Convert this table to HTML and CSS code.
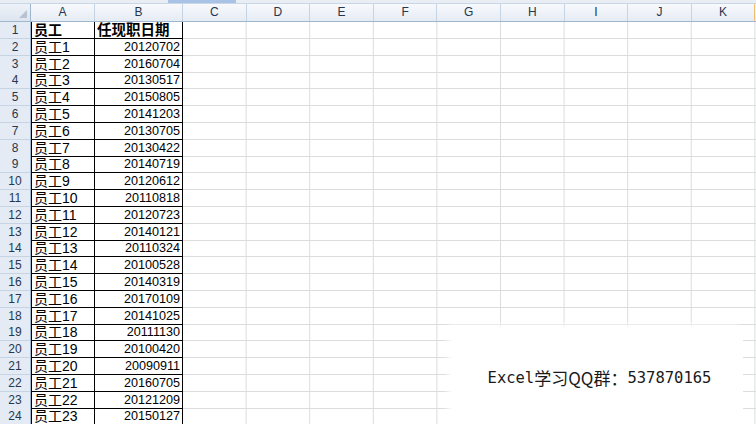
FILE: index.html
```html
<!DOCTYPE html>
<html lang="zh-CN">
<head>
<meta charset="utf-8">
<title>Excel</title>
<link rel="stylesheet" href="styles.css">
</head>
<body>
<div class="strip"><div class="strip-tab"></div></div>
<div class="sheet">
  <div class="hdr">
    <div class="corner"><span class="tri"></span></div>
    <div class="ch">A</div><div class="ch">B</div><div class="ch">C</div><div class="ch">D</div><div class="ch">E</div><div class="ch">F</div><div class="ch">G</div><div class="ch">H</div><div class="ch">I</div><div class="ch">J</div><div class="ch last">K</div>
  </div>
  <div class="row"><div class="rh">1</div><div class="c a bold">员工</div><div class="c b bold head">任现职日期</div><div class="rest"></div></div>
  <div class="row"><div class="rh">2</div><div class="c a">员工1</div><div class="c b">20120702</div><div class="rest"></div></div>
  <div class="row"><div class="rh">3</div><div class="c a">员工2</div><div class="c b">20160704</div><div class="rest"></div></div>
  <div class="row"><div class="rh">4</div><div class="c a">员工3</div><div class="c b">20130517</div><div class="rest"></div></div>
  <div class="row"><div class="rh">5</div><div class="c a">员工4</div><div class="c b">20150805</div><div class="rest"></div></div>
  <div class="row"><div class="rh">6</div><div class="c a">员工5</div><div class="c b">20141203</div><div class="rest"></div></div>
  <div class="row"><div class="rh">7</div><div class="c a">员工6</div><div class="c b">20130705</div><div class="rest"></div></div>
  <div class="row"><div class="rh">8</div><div class="c a">员工7</div><div class="c b">20130422</div><div class="rest"></div></div>
  <div class="row"><div class="rh">9</div><div class="c a">员工8</div><div class="c b">20140719</div><div class="rest"></div></div>
  <div class="row"><div class="rh">10</div><div class="c a">员工9</div><div class="c b">20120612</div><div class="rest"></div></div>
  <div class="row"><div class="rh">11</div><div class="c a">员工10</div><div class="c b">20110818</div><div class="rest"></div></div>
  <div class="row"><div class="rh">12</div><div class="c a">员工11</div><div class="c b">20120723</div><div class="rest"></div></div>
  <div class="row"><div class="rh">13</div><div class="c a">员工12</div><div class="c b">20140121</div><div class="rest"></div></div>
  <div class="row"><div class="rh">14</div><div class="c a">员工13</div><div class="c b">20110324</div><div class="rest"></div></div>
  <div class="row"><div class="rh">15</div><div class="c a">员工14</div><div class="c b">20100528</div><div class="rest"></div></div>
  <div class="row"><div class="rh">16</div><div class="c a">员工15</div><div class="c b">20140319</div><div class="rest"></div></div>
  <div class="row"><div class="rh">17</div><div class="c a">员工16</div><div class="c b">20170109</div><div class="rest"></div></div>
  <div class="row"><div class="rh">18</div><div class="c a">员工17</div><div class="c b">20141025</div><div class="rest"></div></div>
  <div class="row"><div class="rh">19</div><div class="c a">员工18</div><div class="c b">20111130</div><div class="rest"></div></div>
  <div class="row"><div class="rh">20</div><div class="c a">员工19</div><div class="c b">20100420</div><div class="rest"></div></div>
  <div class="row"><div class="rh">21</div><div class="c a">员工20</div><div class="c b">20090911</div><div class="rest"></div></div>
  <div class="row"><div class="rh">22</div><div class="c a">员工21</div><div class="c b">20160705</div><div class="rest"></div></div>
  <div class="row"><div class="rh">23</div><div class="c a">员工22</div><div class="c b">20121209</div><div class="rest"></div></div>
  <div class="row"><div class="rh">24</div><div class="c a">员工23</div><div class="c b">20150127</div><div class="rest"></div></div>
</div>
<div class="note"><span class="mono">Excel</span>学习QQ群：<span class="mono">537870165</span></div>
</body>
</html>
```
FILE: styles.css
```css
html, body {
  margin: 0;
  padding: 0;
  background: #ffffff;
  overflow: hidden;
  width: 756px;
  height: 424px;
}
body {
  position: relative;
  font-family: "Liberation Sans", "Noto Sans CJK SC", sans-serif;
}
.strip {
  height: 4px;
  background: #e9eef5;
  border-bottom: 1px solid #c9d6e6;
  box-sizing: border-box;
  position: relative;
}
.strip-tab {
  margin-left: 168px;
  width: 68px;
  height: 3px;
  background: #a8c3e6;
}
.hdr {
  display: grid;
  grid-template-columns: 31px 64px 88px repeat(9, 63.6px);
  height: 18px;
  background: linear-gradient(#f7f9fc, #e6ecf4);
  border-bottom: 1px solid #9eb6ce;
  box-sizing: border-box;
}
.corner {
  position: relative;
  border-right: 1px solid #9eb6ce;
  background: linear-gradient(#eef2f8, #dde5ef);
}
.tri {
  position: absolute;
  right: 3px;
  bottom: 3px;
  width: 0;
  height: 0;
  border-left: 8px solid transparent;
  border-bottom: 8px solid #b7c3d2;
}
.ch {
  border-right: 1px solid #c5d3e3;
  font-size: 12px;
  line-height: 17px;
  text-align: center;
  color: #27374d;
}
.ch.last {
  border-right: 1px solid #f0c070;
}
.row {
  display: grid;
  grid-template-columns: 31px 64px 88px 1fr;
  height: 16.8px;
}
.rh {
  background: #e4ebf4;
  border-bottom: 1px solid #c5d3e3;
  border-right: 1px solid #9eb6ce;
  font-size: 12px;
  line-height: 16px;
  text-align: center;
  color: #27374d;
  box-sizing: border-box;
}
.c {
  box-sizing: border-box;
  border-bottom: 1px solid #000;
  border-right: 1px solid #000;
  color: #000;
  font-size: 14px;
  line-height: 16px;
  white-space: nowrap;
  overflow: hidden;
}
.a {
  border-left: 1px solid #000;
  padding-left: 2px;
}
.b {
  text-align: right;
  padding-right: 2px;
  font-size: 12.6px;
}
.b.head {
  text-align: left;
  padding-left: 2px;
  padding-right: 0;
  font-size: 14.5px;
}
.bold {
  font-weight: bold;
}
.rest {
  box-sizing: border-box;
  border-bottom: 1px solid #dadcdd;
  background-image: linear-gradient(to right, transparent 62.6px, #dadcdd 62.6px);
  background-size: 63.6px 100%;
}
.note {
  position: absolute;
  left: 456px;
  top: 329px;
  width: 287px;
  height: 95px;
  background: #ffffff;
  box-shadow: -6px -2px 6px 2px #ffffff;
  display: flex;
  align-items: center;
  justify-content: center;
  font-family: "Noto Sans CJK SC", sans-serif;
  font-size: 17px;
  color: #1a1a1a;
  padding-top: 2px;
  box-sizing: border-box;
}
.mono {
  font-family: "DejaVu Sans Mono", monospace;
  font-size: 15.5px;
}
```
